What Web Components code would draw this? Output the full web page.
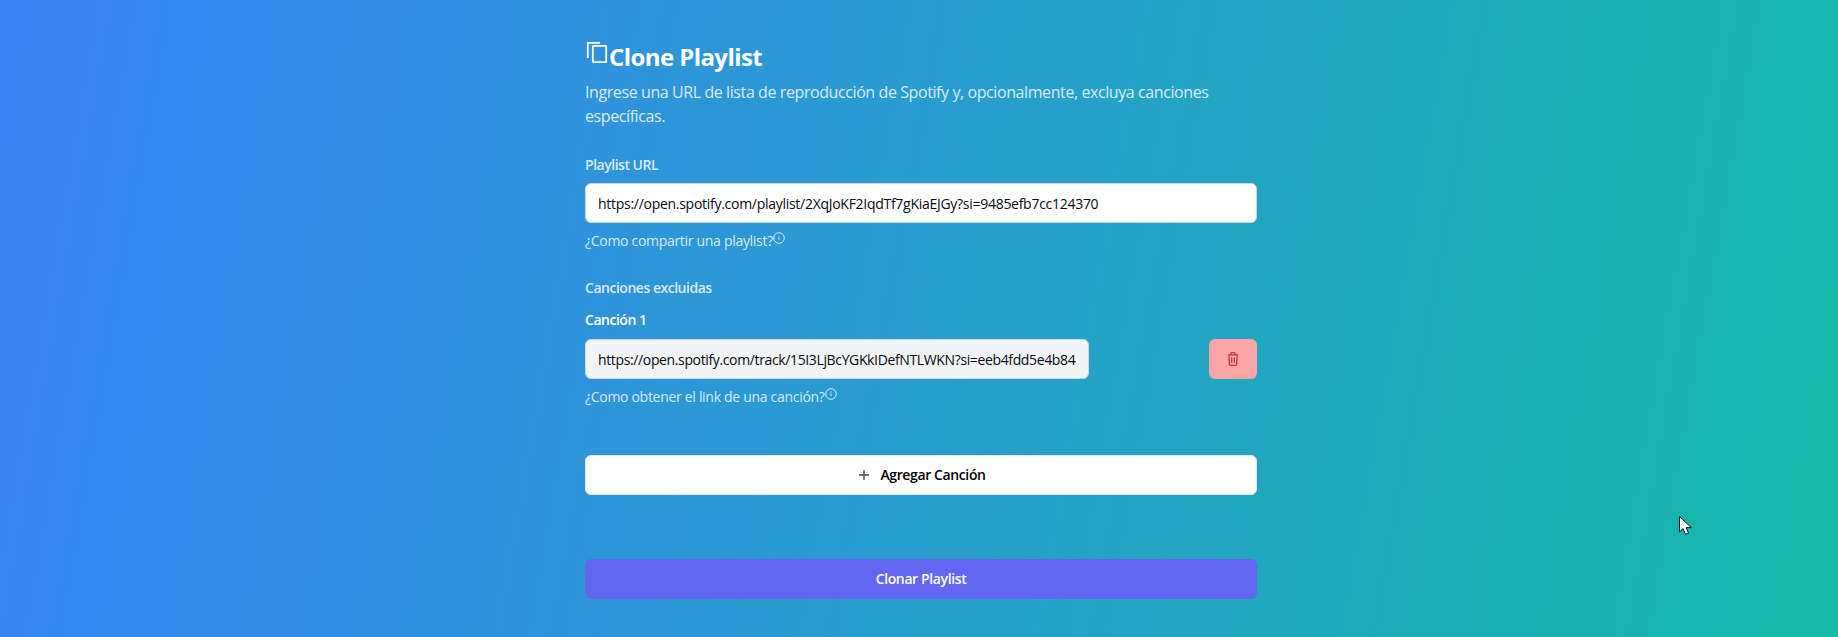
<!DOCTYPE html>
<html lang="es"><head><meta charset="utf-8"><title>Clone Playlist</title>
<style>
html,body{margin:0;height:637px}
body{overflow:hidden;background:linear-gradient(100deg,#3b82f6,#14b8a6);font-family:"Open Sans","Noto Sans",sans-serif}
</style></head><body>
<clone-app></clone-app>
<mouse-cursor></mouse-cursor>
<script>
const FONT='"Open Sans","Noto Sans",sans-serif';
const icons={
copy:'<svg width="24" height="24" viewBox="0 0 24 24" fill="none" stroke="currentColor" stroke-width="1.8"><path d="M2.8 18V2.8H15"/><rect x="7.8" y="5.8" width="13.4" height="16.4" rx="1"/></svg>',
info:'<svg width="12" height="12" viewBox="0 0 12 12" fill="none" stroke="currentColor" stroke-width="1"><circle cx="6" cy="6" r="5.3"/><path d="M6 5.4v2.4M6 3.6v.8"/></svg>',
plus:'<svg width="16" height="16" viewBox="0 0 16 16" fill="none" stroke="#374151" stroke-width="1.3"><path d="M8 3v10M3 8h10"/></svg>',
trash:'<svg width="14" height="16" viewBox="1 0 14 16" fill="none" stroke="currentColor" stroke-width="1.3"><path d="M2.8 3.9h10.4M6 3.7V2.2c0-.3.2-.5.5-.5h3c.3 0 .5.2.5.5v1.5M3.9 4l.5 9.2c0 .6.5 1.1 1.1 1.1h5c.6 0 1.1-.5 1.1-1.1l.5-9.2M6.7 6.6v5.2M9.3 6.6v5.2"/></svg>'
};
class CloneHeading extends HTMLElement{constructor(){super();this.attachShadow({mode:'open'}).innerHTML=`<style>
:host{display:block;color:#fff}
h2{display:flex;align-items:center;margin:0;font:700 24px/32px ${FONT};letter-spacing:-.58px}
svg{display:block;flex:none;margin-top:-10px}
p{margin:7px 0 0;font:400 16px/24px ${FONT};letter-spacing:-.41px;color:#dbeafe}
</style><h2>${icons.copy}<slot name="title"></slot></h2><p><slot></slot></p>`}}
class FieldLabel extends HTMLElement{constructor(){super();this.attachShadow({mode:'open'}).innerHTML=`<style>
:host{display:block;font:600 14px/20px ${FONT};letter-spacing:-.48px;color:var(--label,#dbeafe)}
</style><slot></slot>`}}
class UrlField extends HTMLElement{constructor(){super();this.attachShadow({mode:'open'}).innerHTML=`<style>
:host{display:block;box-sizing:border-box;height:40px;flex:1;min-width:0;border:1px solid #d1d5db;border-radius:6px;background:var(--bg,#fff);padding:0 12px;font:400 14px/40px ${FONT};letter-spacing:var(--ls,-.28px);color:#050a14;white-space:nowrap;overflow:hidden}
</style><slot></slot>`}}
class HelpLink extends HTMLElement{constructor(){super();this.attachShadow({mode:'open'}).innerHTML=`<style>
:host{display:flex;align-items:flex-start;font:400 14px/20px ${FONT};letter-spacing:-.3px;color:#d9e9f5}
svg{display:block;margin-top:1px}
</style><slot></slot>${icons.info}`}}
class ActionButton extends HTMLElement{constructor(){super();this.attachShadow({mode:'open'}).innerHTML=`<style>
:host{display:flex;box-sizing:border-box;height:40px;align-items:center;justify-content:center;gap:8px;border-radius:6px;font:600 14px/20px ${FONT};letter-spacing:-.38px}
:host([variant=light]){background:#fff;color:#000;border:1px solid #e5e7eb}
:host([variant=primary]){background:#6366f1;color:#fff}
:host([variant=danger]){background:#fda4a6;color:#b83a48;width:48px;flex:none}
svg{display:block}
</style><span id="i"></span><slot></slot>`;
const k=this.getAttribute('icon'),s=this.shadowRoot.getElementById('i');
if(k){s.innerHTML=icons[k];s.style.display='block'}else s.remove()}}
class CloneApp extends HTMLElement{constructor(){super();this.attachShadow({mode:'open'}).innerHTML=`<style>
:host{display:block;box-sizing:border-box;width:672px;margin-left:585px;padding-top:41px}
.url{margin-top:8px}
.help{margin-top:8px}
.row{display:flex;justify-content:space-between;gap:120px;margin-top:9px;--bg:#f3f4f6;--ls:-.365px}
.s1{margin-top:27px}
.s2{margin-top:27px}
.s3{margin-top:12px;--label:#fff}
.add{margin-top:48px}
.go{margin-top:64px}
</style>
<clone-heading><span slot="title">Clone Playlist</span>Ingrese una URL de lista de reproducción de Spotify y, opcionalmente, excluya canciones específicas.</clone-heading>
<field-label class="s1">Playlist URL</field-label>
<url-field class="url">https://open.spotify.com/playlist/2XqJoKF2IqdTf7gKiaEJGy?si=9485efb7cc124370</url-field>
<help-link class="help">¿Como compartir una playlist?</help-link>
<field-label class="s2">Canciones excluidas</field-label>
<field-label class="s3">Canción 1</field-label>
<div class="row"><url-field>https://open.spotify.com/track/15I3LjBcYGKkIDefNTLWKN?si=eeb4fdd5e4b84</url-field><action-button variant="danger" icon="trash" aria-label="Eliminar"></action-button></div>
<help-link class="help">¿Como obtener el link de una canción?</help-link>
<action-button class="add" variant="light" icon="plus">Agregar Canción</action-button>
<action-button class="go" variant="primary">Clonar Playlist</action-button>`}}
class MouseCursor extends HTMLElement{constructor(){super();this.attachShadow({mode:'open'}).innerHTML=`<style>
:host{position:fixed;left:1679px;top:516px;display:block;width:14px;height:20px}
svg{display:block}
</style><svg width="14" height="20" viewBox="0 0 14 20"><path d="M.5.5v15.5l3.6-3.4 2.4 5.8 3-1.2-2.4-5.6h5.2z" fill="#fff" stroke="#111" stroke-width="1"/></svg>`}}
[['clone-heading',CloneHeading],['field-label',FieldLabel],['url-field',UrlField],['help-link',HelpLink],['action-button',ActionButton],['clone-app',CloneApp],['mouse-cursor',MouseCursor]].forEach(([n,c])=>customElements.define(n,c));
</script></body></html>
